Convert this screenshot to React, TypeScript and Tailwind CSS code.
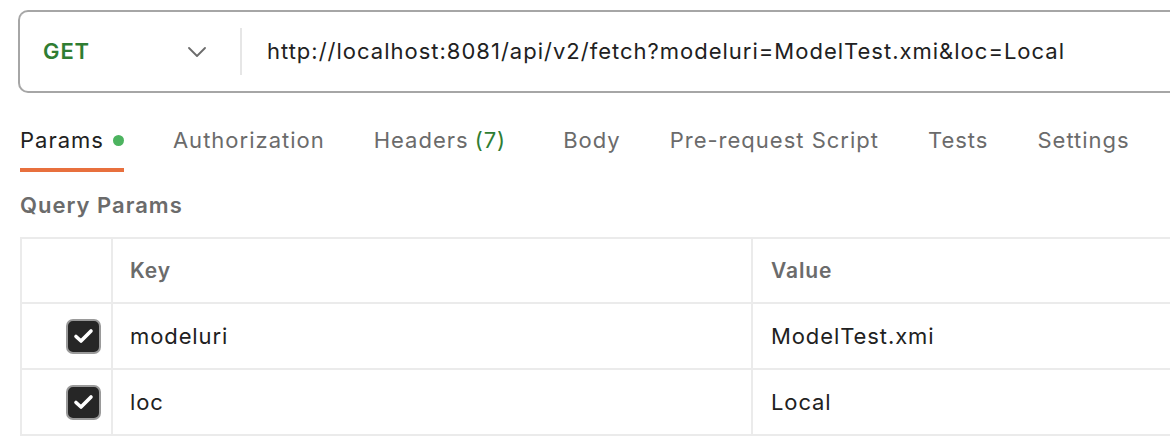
const tabs = [
  { name: 'Params', active: true, dot: true },
  { name: 'Authorization' },
  { name: 'Headers', count: '(7)' },
  { name: 'Body', extra: true },
  { name: 'Pre-request Script' },
  { name: 'Tests' },
  { name: 'Settings' },
];

const params = [
  { key: 'modeluri', value: 'ModelTest.xmi' },
  { key: 'loc', value: 'Local' },
];

function Checkbox() {
  return (
    <div className="flex h-[35px] w-[35px] items-center justify-center rounded-[7px] border-2 border-[#9a9a9a] bg-[#262626]">
      <svg width="21" height="16" viewBox="0 0 21 16" fill="none">
        <path d="M3 8.5 L8 13 L18 3" stroke="#ffffff" strokeWidth="3.6" strokeLinecap="round" strokeLinejoin="round" />
      </svg>
    </div>
  );
}

export default function App() {
  return (
    <div className="h-[436px] w-[1170px] overflow-hidden bg-white font-['Inter',sans-serif] tracking-[0.9px] text-[#212121]">
      {/* Request bar */}
      <div className="pl-[18px] pt-[10px]">
        <div className="flex h-[83px] items-center rounded-l-[10px] border-2 border-r-0 border-[#a6a6a6]">
          <div className="flex w-[220px] items-center pl-[23px] pr-[34px]">
            <span className="text-[22px] font-semibold text-[#2f7d32]">GET</span>
            <svg className="ml-auto" width="18" height="10" viewBox="0 0 18 10" fill="none">
              <path d="M1 1 L9 9 L17 1" stroke="#6b6b6b" strokeWidth="1.8" strokeLinecap="round" strokeLinejoin="round" />
            </svg>
          </div>
          <div className="h-[47px] w-[2px] bg-[#e6e6e6]" />
          <div className="pl-[25px] text-[22px] tracking-[1px] whitespace-nowrap">
            http://localhost:8081/api/v2/fetch?modeluri=ModelTest.xmi&amp;loc=Local
          </div>
        </div>
      </div>

      {/* Tabs */}
      <div className="mt-[33px] flex gap-[49px] pl-[20px] tracking-[1px]">
        {tabs.map((t) => (
          <div key={t.name} className={t.extra ? 'ml-[8px] flex flex-col' : 'flex flex-col'}>
            <div
              className={
                t.active
                  ? 'flex h-[28px] items-center text-[22px] leading-[28px] text-[#212121]'
                  : 'flex h-[28px] items-center text-[22px] leading-[28px] text-[#6b6b6b]'
              }
            >
              <span className="whitespace-nowrap">{t.name}</span>
              {t.count && <span className="ml-[6px] text-[#2f7d32]">{t.count}</span>}
              {t.dot && <span className="ml-[9px] h-[11px] w-[11px] rounded-full bg-[#4cb35f]" />}
            </div>
            <div className={t.active ? 'mt-[14px] h-[4px] bg-[#e8703e]' : 'mt-[14px] h-[4px]'} />
          </div>
        ))}
      </div>

      <div className="mt-[19px] pl-[20px] text-[22px] leading-[28px] font-semibold tracking-[1px] text-[#6b6b6b]">
        Query Params
      </div>

      {/* Params table */}
      <div className="ml-[20px] mt-[18px] border-l-2 border-t-2 border-[#ebebeb]">
        <div className="flex h-[65px] border-b-2 border-[#ebebeb]">
          <div className="w-[91px] border-r-2 border-[#ebebeb]" />
          <div className="flex w-[640px] items-center border-r-2 border-[#ebebeb] pl-[17px] text-[21px] font-semibold text-[#6b6b6b]">
            Key
          </div>
          <div className="flex flex-1 items-center pl-[18px] text-[21px] font-semibold text-[#6b6b6b]">Value</div>
        </div>
        {params.map((p) => (
          <div key={p.key} className="flex h-[66px] border-b-2 border-[#ebebeb]">
            <div className="flex w-[91px] items-center border-r-2 border-[#ebebeb] pl-[44px]">
              <Checkbox />
            </div>
            <div className="flex w-[640px] items-center border-r-2 border-[#ebebeb] pl-[17px] text-[22px]">{p.key}</div>
            <div className="flex flex-1 items-center pl-[18px] text-[22px]">{p.value}</div>
          </div>
        ))}
      </div>
    </div>
  );
}
